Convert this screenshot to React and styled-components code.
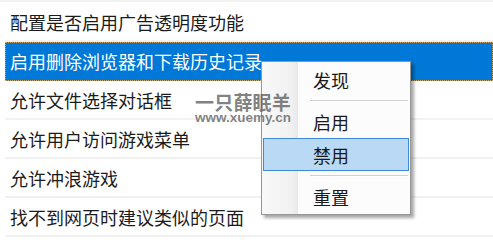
import styled, { createGlobalStyle } from "styled-components";

const GlobalStyle = createGlobalStyle`
  body {
    margin: 0;
    background: #ffffff;
    font-family: "Noto Sans CJK SC", "Noto Sans", sans-serif;
  }
`;

const Page = styled.div`
  position: relative;
  width: 493px;
  height: 247px;
  overflow: hidden;
  background: #ffffff;
`;

const List = styled.div`
  padding-top: 1px;
  border-top: 2px solid #f2f2f2;
  display: flex;
  flex-direction: column;
`;

const Row = styled.div`
  height: 39px;
  box-sizing: border-box;
  margin-left: 5px;
  padding-left: 5px;
  display: flex;
  align-items: center;
  font-size: 18px;
  color: ${(p) => (p.selected ? "#ffffff" : "#1b1b1b")};
  background: ${(p) => (p.selected ? "#0078d7" : "transparent")};
  border-bottom: 2px solid ${(p) => (p.selected ? "#0078d7" : "#f1f1f1")};
  outline: ${(p) => (p.selected ? "1px dotted #c9a46a" : "none")};
  outline-offset: -1px;
  white-space: nowrap;
`;

const Menu = styled.div`
  position: absolute;
  left: 261px;
  top: 61px;
  width: 150px;
  box-sizing: border-box;
  padding: 1px;
  background: #fcfcfc;
  border: 1px solid #979797;
  box-shadow: 3px 3px 3px rgba(0, 0, 0, 0.35);
  display: flex;
  flex-direction: column;

  &::before {
    content: "";
    position: absolute;
    left: 0;
    top: 0;
    bottom: 0;
    width: 36px;
    background: linear-gradient(to right, #f8f8f8, #f1f1f1 80%, #e9e9e9);
  }
`;

const Item = styled.div`
  position: relative;
  height: 33px;
  box-sizing: border-box;
  padding-left: 49px;
  display: flex;
  align-items: center;
  font-size: 18px;
  color: #1a1a1a;
  background: ${(p) => (p.active ? "#b9d9f5" : "transparent")};
  border: 1px solid ${(p) => (p.active ? "#3d8ad6" : "transparent")};
`;

const Separator = styled.div`
  position: relative;
  height: 9px;
  display: flex;
  align-items: center;
  padding-left: 47px;
  padding-right: 1px;

  &::after {
    content: "";
    flex: 1;
    height: 1px;
    background: #cfcfcf;
    border-bottom: 1px solid #ffffff;
  }
`;

const Watermark = styled.div`
  position: absolute;
  left: 195px;
  top: 92px;
  display: flex;
  flex-direction: column;
  align-items: center;
  pointer-events: none;
  color: rgba(95, 95, 95, 0.78);
  line-height: 1;
`;

const MarkTitle = styled.div`
  font-size: 19px;
  font-weight: 700;
  letter-spacing: 0.2px;
`;

const MarkUrl = styled.div`
  margin-top: 0;
  font-family: "Liberation Sans", Arial, sans-serif;
  font-size: 13.5px;
  font-weight: 700;
`;

const rows = [
  "配置是否启用广告透明度功能",
  "启用删除浏览器和下载历史记录",
  "允许文件选择对话框",
  "允许用户访问游戏菜单",
  "允许冲浪游戏",
  "找不到网页时建议类似的页面",
];

export default function App() {
  return (
    <Page>
      <GlobalStyle />
      <List>
        {rows.map((text, i) => (
          <Row key={text} selected={i === 1}>
            {text}
          </Row>
        ))}
      </List>
      <Menu>
        <Item>发现</Item>
        <Separator />
        <Item>启用</Item>
        <Item active>禁用</Item>
        <Separator />
        <Item>重置</Item>
      </Menu>
      <Watermark>
        <MarkTitle>一只薛眠羊</MarkTitle>
        <MarkUrl>www.xuemy.cn</MarkUrl>
      </Watermark>
    </Page>
  );
}
